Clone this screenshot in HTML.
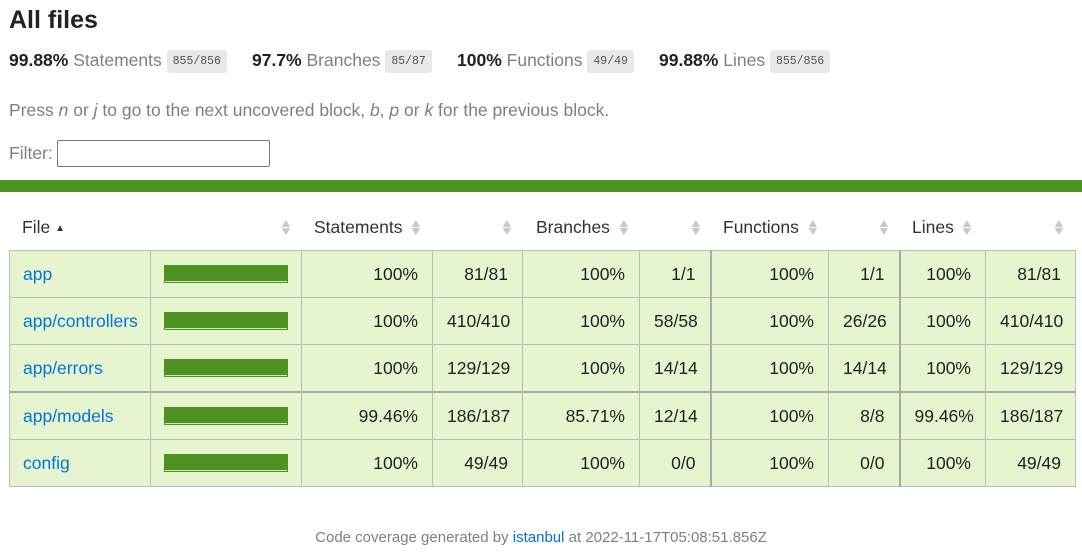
<!DOCTYPE html>
<html><head><style>
body{margin:0;font-family:"Liberation Sans",Arial,sans-serif;font-size:17.5px;color:#333;background:#fff;width:1082px;height:556px;overflow:hidden;position:relative}
h1{position:absolute;left:9px;top:6px;margin:0;font-size:25px;font-weight:bold;color:#222}
.sum{position:absolute;top:50px;left:9px;white-space:nowrap}
.sum span{position:absolute;white-space:nowrap}
.q{color:#7f7f7f}
.b{font-weight:bold;color:#222}
.f{background:#e8e8e8;color:#555;font-family:"Liberation Mono",monospace;font-size:11.5px;padding:5px 6px;border-radius:3px;position:relative;top:-2px}
.press{position:absolute;left:9px;top:100px;color:#7f7f7f}
.filter{position:absolute;left:9px;top:143px;color:#7f7f7f}
.inp{position:absolute;left:57px;top:140px;width:211px;height:25px;border:1px solid #767676;border-radius:2px}
.green{position:absolute;left:0;top:180px;width:1082px;height:12px;background:#4d9221}
.th{position:absolute;top:217px}
.arr{position:absolute;top:219px;color:#c8c8c8;font-size:12px;line-height:8px;transform:scaleX(1.2)}
table{position:absolute;left:9px;top:250px;border-collapse:collapse;background:#e6f5d0;table-layout:fixed;width:1067px}
td{border:1px solid #bbb;height:46px;padding:0 14px;text-align:right;color:#222;white-space:nowrap}
td.l{text-align:left;padding-left:13px}
a{color:#0074d9;text-decoration:none}
.bar{width:124px;height:18px;background:#4d9221;position:relative}
.bar:after{content:"";position:absolute;left:1px;right:1px;top:16px;height:1px;background:#cfe8b5}
.tk{border-left:2px solid #aaa}
</style></head><body>
<h1>All files</h1>
<div class="sum">
<span style="left:0"><b class="b">99.88%</b> <span class="q" style="position:static">Statements</span> <span class="f" style="position:relative">855/856</span></span>
<span style="left:243px"><b class="b">97.7%</b> <span class="q" style="position:static">Branches</span> <span class="f" style="position:relative">85/87</span></span>
<span style="left:448px"><b class="b">100%</b> <span class="q" style="position:static">Functions</span> <span class="f" style="position:relative">49/49</span></span>
<span style="left:650px"><b class="b">99.88%</b> <span class="q" style="position:static">Lines</span> <span class="f" style="position:relative">855/856</span></span>
</div>
<div class="press">Press <i>n</i> or <i>j</i> to go to the next uncovered block, <i>b</i>, <i>p</i> or <i>k</i> for the previous block.</div>
<div class="filter">Filter:</div>
<div class="inp"></div>
<div class="green"></div>
<div class="th" style="left:22px">File <span style="font-size:10px;position:relative;top:-2px">&#9650;</span></div>
<div class="arr" style="left:280px">&#9650;<br>&#9660;</div>
<div class="th" style="left:314px">Statements</div><div class="arr" style="left:410px">&#9650;<br>&#9660;</div>
<div class="arr" style="left:501px">&#9650;<br>&#9660;</div>
<div class="th" style="left:536px">Branches</div><div class="arr" style="left:618px">&#9650;<br>&#9660;</div>
<div class="arr" style="left:690px">&#9650;<br>&#9660;</div>
<div class="th" style="left:723px">Functions</div><div class="arr" style="left:807px">&#9650;<br>&#9660;</div>
<div class="arr" style="left:878px">&#9650;<br>&#9660;</div>
<div class="th" style="left:912px">Lines</div><div class="arr" style="left:961px">&#9650;<br>&#9660;</div>
<div class="arr" style="left:1053px">&#9650;<br>&#9660;</div>
<table>
<colgroup><col style="width:141px"><col style="width:151px"><col style="width:131px"><col style="width:90px"><col style="width:117px"><col style="width:71px"><col style="width:118px"><col style="width:71px"><col style="width:86px"><col style="width:90px"></colgroup>
<tr><td class="l"><a>app</a></td><td class="l"><div class="bar"></div></td><td>100%</td><td>81/81</td><td>100%</td><td>1/1</td><td class="tk">100%</td><td>1/1</td><td class="tk">100%</td><td>81/81</td></tr>
<tr><td class="l"><a>app/controllers</a></td><td class="l"><div class="bar"></div></td><td>100%</td><td>410/410</td><td>100%</td><td>58/58</td><td class="tk">100%</td><td>26/26</td><td class="tk">100%</td><td>410/410</td></tr>
<tr><td class="l"><a>app/errors</a></td><td class="l"><div class="bar"></div></td><td>100%</td><td>129/129</td><td>100%</td><td>14/14</td><td class="tk">100%</td><td>14/14</td><td class="tk">100%</td><td>129/129</td></tr>
<tr style="border-top:2px solid #aaa"><td class="l"><a>app/models</a></td><td class="l"><div class="bar"></div></td><td>99.46%</td><td>186/187</td><td>85.71%</td><td>12/14</td><td class="tk">100%</td><td>8/8</td><td class="tk">99.46%</td><td>186/187</td></tr>
<tr><td class="l"><a>config</a></td><td class="l"><div class="bar"></div></td><td>100%</td><td>49/49</td><td>100%</td><td>0/0</td><td class="tk">100%</td><td>0/0</td><td class="tk">100%</td><td>49/49</td></tr>
</table>
<div style="position:absolute;top:529px;left:0;width:1082px;text-align:center;font-size:15px;color:#7f7f7f">Code coverage generated by <a>istanbul</a> at 2022-11-17T05:08:51.856Z</div>
</body></html>
